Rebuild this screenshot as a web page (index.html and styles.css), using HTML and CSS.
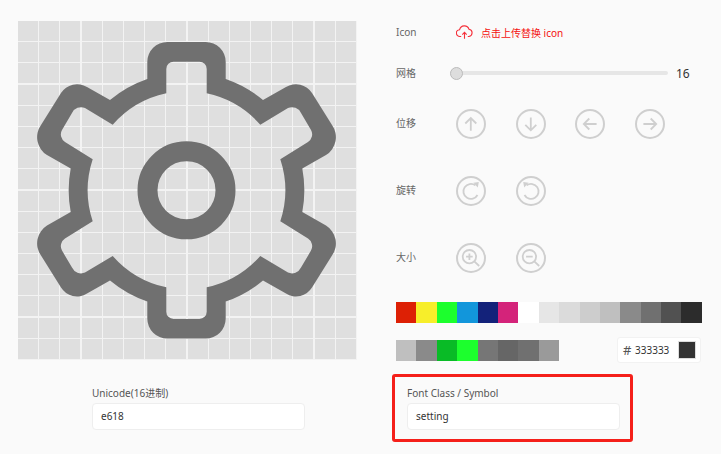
FILE: index.html
```html
<!DOCTYPE html>
<html>
<head>
  <meta charset="utf-8">
  <title>Icon editor</title>
  <link rel="stylesheet" href="styles.css">
</head>
<body>
  <div class="page">
    <div class="top">
      <div class="canvas">
        <svg class="gear" viewBox="18 21 339 339">
          <g transform="translate(186.5 190.3)">
            <path fill-rule="evenodd" d="M0 -148.3H-19.2A20 20 0 0 0 -39.2 -128.3V-111.3A118 118 0 0 0 -76.5 -90.3L-99.5 -103.3A19 19 0 0 0 -125.5 -97.3L-145.5 -65.3A21 21 0 0 0 -139.5 -35.3L-115.8 -21.8A118 118 0 0 0 -115.8 21.8L-139.5 35.3A21 21 0 0 0 -145.5 65.3L-125.5 97.3A19 19 0 0 0 -99.5 103.3L-76.5 90.3A118 118 0 0 0 -39.2 111.3V128.3A20 20 0 0 0 -19.2 148.3H19.2A20 20 0 0 0 39.2 128.3V111.3A118 118 0 0 0 76.5 90.3L99.5 103.3A19 19 0 0 0 125.5 97.3L145.5 65.3A21 21 0 0 0 139.5 35.3L115.8 21.8A118 118 0 0 0 115.8 -21.8L139.5 -35.3A21 21 0 0 0 145.5 -65.3L125.5 -97.3A19 19 0 0 0 99.5 -103.3L76.5 -90.3A118 118 0 0 0 39.2 -111.3V-128.3A20 20 0 0 0 19.2 -148.3Z
            M0 -128.6H13A7.2 7.2 0 0 1 20.2 -121.4V-97A99 99 0 0 1 73.8 -65.6L101.5 -82.3A10 10 0 0 1 114.5 -77.3L124.5 -60.3A9 9 0 0 1 121.5 -48.3L93.8 -31A99 99 0 0 1 93.8 31L121.5 48.3A9 9 0 0 1 124.5 60.3L114.5 77.3A10 10 0 0 1 101.5 82.3L73.8 65.6A99 99 0 0 1 20.2 97V121.4A7.2 7.2 0 0 1 13 128.6H-13A7.2 7.2 0 0 1 -20.2 121.4V97A99 99 0 0 1 -73.8 65.6L-101.5 82.3A10 10 0 0 1 -114.5 77.3L-124.5 60.3A9 9 0 0 1 -121.5 48.3L-93.8 31A99 99 0 0 1 -93.8 -31L-121.5 -48.3A9 9 0 0 1 -124.5 -60.3L-114.5 -77.3A10 10 0 0 1 -101.5 -82.3L-73.8 -65.6A99 99 0 0 1 -20.2 -97V-121.4A7.2 7.2 0 0 1 -13 -128.6Z"/>
            <circle class="gear-hub" r="39"/>
          </g>
        </svg>
      </div>

      <div class="panel">
        <div class="row row-icon">
          <div class="label">Icon</div>
          <div class="upload">
            <svg class="upload-icon" viewBox="0 0 17 14">
              <path d="M5.2 11.5H4A3.4 3.4 0 0 1 3.6 4.7A4.9 4.9 0 0 1 13 4.2A3.7 3.7 0 0 1 13 11.5H11.8"/>
              <path d="M8.5 13.8V7.6M6.3 9.6L8.5 7.4L10.7 9.6"/>
            </svg>
            <span>点击上传替换 icon</span>
          </div>
        </div>

        <div class="row row-grid">
          <div class="label">网格</div>
          <div class="slider">
            <div class="track"><div class="thumb"></div></div>
            <div class="slider-value">16</div>
          </div>
        </div>

        <div class="row row-move">
          <div class="label">位移</div>
          <div class="btns">
            <div class="btn"><svg viewBox="0 0 30 30"><path d="M14.8 21.8V9M9.3 14.5L14.8 9L20.3 14.5"/></svg></div>
            <div class="btn"><svg viewBox="0 0 30 30"><path d="M14.8 8.5V21.3M9.3 15.8L14.8 21.3L20.3 15.8"/></svg></div>
            <div class="btn"><svg viewBox="0 0 30 30"><path d="M21.6 15H8.8M14.3 9.5L8.8 15L14.3 20.5"/></svg></div>
            <div class="btn"><svg viewBox="0 0 30 30"><path d="M8.4 15H21.2M15.7 9.5L21.2 15L15.7 20.5"/></svg></div>
          </div>
        </div>

        <div class="row row-rotate">
          <div class="label">旋转</div>
          <div class="btns">
            <div class="btn"><svg viewBox="0 0 30 30"><path d="M19.4 9.4A7.5 7.5 0 1 0 21.5 19"/><path class="solid" d="M17.4 6.8L22.8 6L21.8 11.4Z"/></svg></div>
            <div class="btn"><svg viewBox="0 0 30 30"><path d="M10.6 9.4A7.5 7.5 0 1 1 8.5 19"/><path class="solid" d="M12.6 6.8L7.2 6L8.2 11.4Z"/></svg></div>
          </div>
        </div>

        <div class="row row-size">
          <div class="label">大小</div>
          <div class="btns">
            <div class="btn"><svg viewBox="0 0 30 30"><circle cx="13.4" cy="13.7" r="6.7"/><path d="M13.4 10.4V17M10.1 13.7H16.7M18.3 18.4L23.2 23"/></svg></div>
            <div class="btn"><svg viewBox="0 0 30 30"><circle cx="13.4" cy="13.7" r="6.7"/><path d="M10.1 13.7H16.7M18.3 18.4L23.2 23"/></svg></div>
          </div>
        </div>

        <div class="swatches swatches-main">
          <i class="c-red"></i><i class="c-yellow"></i><i class="c-green"></i><i class="c-blue"></i><i class="c-navy"></i><i class="c-pink"></i><i class="c-white"></i><i class="c-g1"></i><i class="c-g2"></i><i class="c-g3"></i><i class="c-g4"></i><i class="c-g5"></i><i class="c-g6"></i><i class="c-g7"></i><i class="c-g8"></i>
        </div>

        <div class="row-recent">
          <div class="swatches">
            <i class="c-g4"></i><i class="c-g5"></i><i class="c-dkgreen"></i><i class="c-green"></i><i class="c-r1"></i><i class="c-r2"></i><i class="c-g6"></i><i class="c-r3"></i>
          </div>
          <div class="hex">
            <span class="hex-mark">#</span>
            <span class="hex-value">333333</span>
            <span class="hex-chip"></span>
          </div>
        </div>
      </div>
    </div>

    <div class="fields">
      <div class="field">
        <div class="field-label">Unicode(16进制)</div>
        <div class="field-input">e618</div>
      </div>
      <div class="field field-marked">
        <div class="field-label">Font Class / Symbol</div>
        <div class="field-input">setting</div>
      </div>
    </div>
  </div>
</body>
</html>
```

FILE: styles.css
```css
* {
  box-sizing: border-box;
}

body {
  margin: 0;
  background-color: #fafafa;
  font-family: "Noto Sans", "Noto Sans CJK SC", sans-serif;
  font-size: 10px;
  color: #555;
}

.page {
  width: 721px;
  height: 454px;
  overflow: hidden;
  padding: 17px 0 0 18px;
}

.top {
  display: flex;
}

.canvas {
  width: 339px;
  height: 339px;
  margin-top: 4px;
  flex-shrink: 0;
  background-color: #dfdfdf;
  background-image:
    repeating-linear-gradient(to right, transparent 0 20px, #f3f3f3 20px 21.19px),
    repeating-linear-gradient(to bottom, transparent 0 20px, #f3f3f3 20px 21.19px);
}

.gear {
  display: block;
  width: 339px;
  height: 339px;
  fill: #707070;
}

.gear-hub {
  fill: none;
  stroke: #707070;
  stroke-width: 20;
}

.panel {
  margin-left: 39px;
  width: 306px;
}

.row {
  display: flex;
  align-items: center;
  height: 30px;
}

.row-icon {
  margin-bottom: 11px;
}

.row-grid {
  margin-bottom: 21px;
}

.row-move,
.row-rotate {
  margin-bottom: 37px;
}

.row-size {
  margin-bottom: 29px;
}

.label {
  width: 60px;
  flex-shrink: 0;
  line-height: 14px;
  padding-bottom: 3px;
  color: #666;
}

.row-icon .label,
.row-grid .label {
  padding-bottom: 0;
}

.upload {
  display: flex;
  align-items: center;
  color: #f40f0f;
}

.upload-icon {
  width: 17px;
  height: 14px;
  margin-right: 8px;
  fill: none;
  stroke: #f5303a;
  stroke-width: 1.1;
}

.slider {
  display: flex;
  align-items: center;
  margin-left: -6px;
  width: 252px;
}

.track {
  position: relative;
  width: 218px;
  height: 4px;
  border-radius: 2px;
  background-color: #e6e6e6;
}

.thumb {
  position: absolute;
  left: 0;
  top: -4.5px;
  width: 13px;
  height: 13px;
  border-radius: 50%;
  border: 1px solid #bbb;
  background-color: #ddd;
}

.slider-value {
  margin-left: 8px;
  font-size: 12px;
  color: #333;
}

.btns {
  display: flex;
  gap: 29.5px;
}

.btn {
  width: 30px;
  height: 30px;
  border-radius: 50%;
  border: 2px solid #cfcfcf;
}

.btn svg {
  display: block;
  width: 30px;
  height: 30px;
  margin: -2px;
  fill: none;
  stroke: #cfcfcf;
  stroke-width: 1.8;
}

.btn svg .solid {
  fill: #cfcfcf;
  stroke: none;
}

.swatches {
  display: flex;
  height: 21px;
}

.swatches i {
  display: block;
  width: 20.4px;
}

.swatches-main {
  margin-bottom: 14px;
}

.row-recent {
  display: flex;
  align-items: center;
  justify-content: space-between;
  width: 305px;
}

.c-red { background-color: #dd2005; }
.c-yellow { background-color: #f7ee2a; }
.c-green { background-color: #1cff2d; }
.c-blue { background-color: #1296db; }
.c-navy { background-color: #13227a; }
.c-pink { background-color: #d4237a; }
.c-white { background-color: #fff; }
.c-g1 { background-color: #e6e6e6; }
.c-g2 { background-color: #dbdbdb; }
.c-g3 { background-color: #cdcdcd; }
.c-g4 { background-color: #bfbfbf; }
.c-g5 { background-color: #8a8a8a; }
.c-g6 { background-color: #707070; }
.c-g7 { background-color: #515151; }
.c-g8 { background-color: #2c2c2c; }
.c-dkgreen { background-color: #09bb26; }
.c-r1 { background-color: #767676; }
.c-r2 { background-color: #666; }
.c-r3 { background-color: #9a9a9a; }

.hex {
  display: flex;
  align-items: center;
  width: 84px;
  height: 26px;
  padding: 0 4px 0 5px;
  border: 1px solid #f2f2f2;
  border-radius: 3px;
  background-color: #fff;
  color: #333;
}

.hex-mark {
  width: 12px;
  font-size: 13px;
  color: #555;
}

.hex-value {
  flex: 1;
}

.hex-chip {
  width: 18px;
  height: 18px;
  background-color: #333;
  border: 1px solid #ddd;
}

.fields {
  display: flex;
  margin: 11px 0 0 59px;
  gap: 74px;
}

.field {
  width: 241px;
  height: 68px;
  padding: 10px 10px 0 12px;
  border: 3px solid transparent;
  border-radius: 3px;
}

.field-marked {
  border-color: #f5201a;
}

.field-label {
  height: 16px;
  line-height: 13px;
  color: #555;
}

.field-input {
  height: 27px;
  width: 213px;
  padding-left: 8px;
  line-height: 25px;
  border: 1px solid #eee;
  border-radius: 4px;
  background-color: #fff;
  color: #333;
}
```
